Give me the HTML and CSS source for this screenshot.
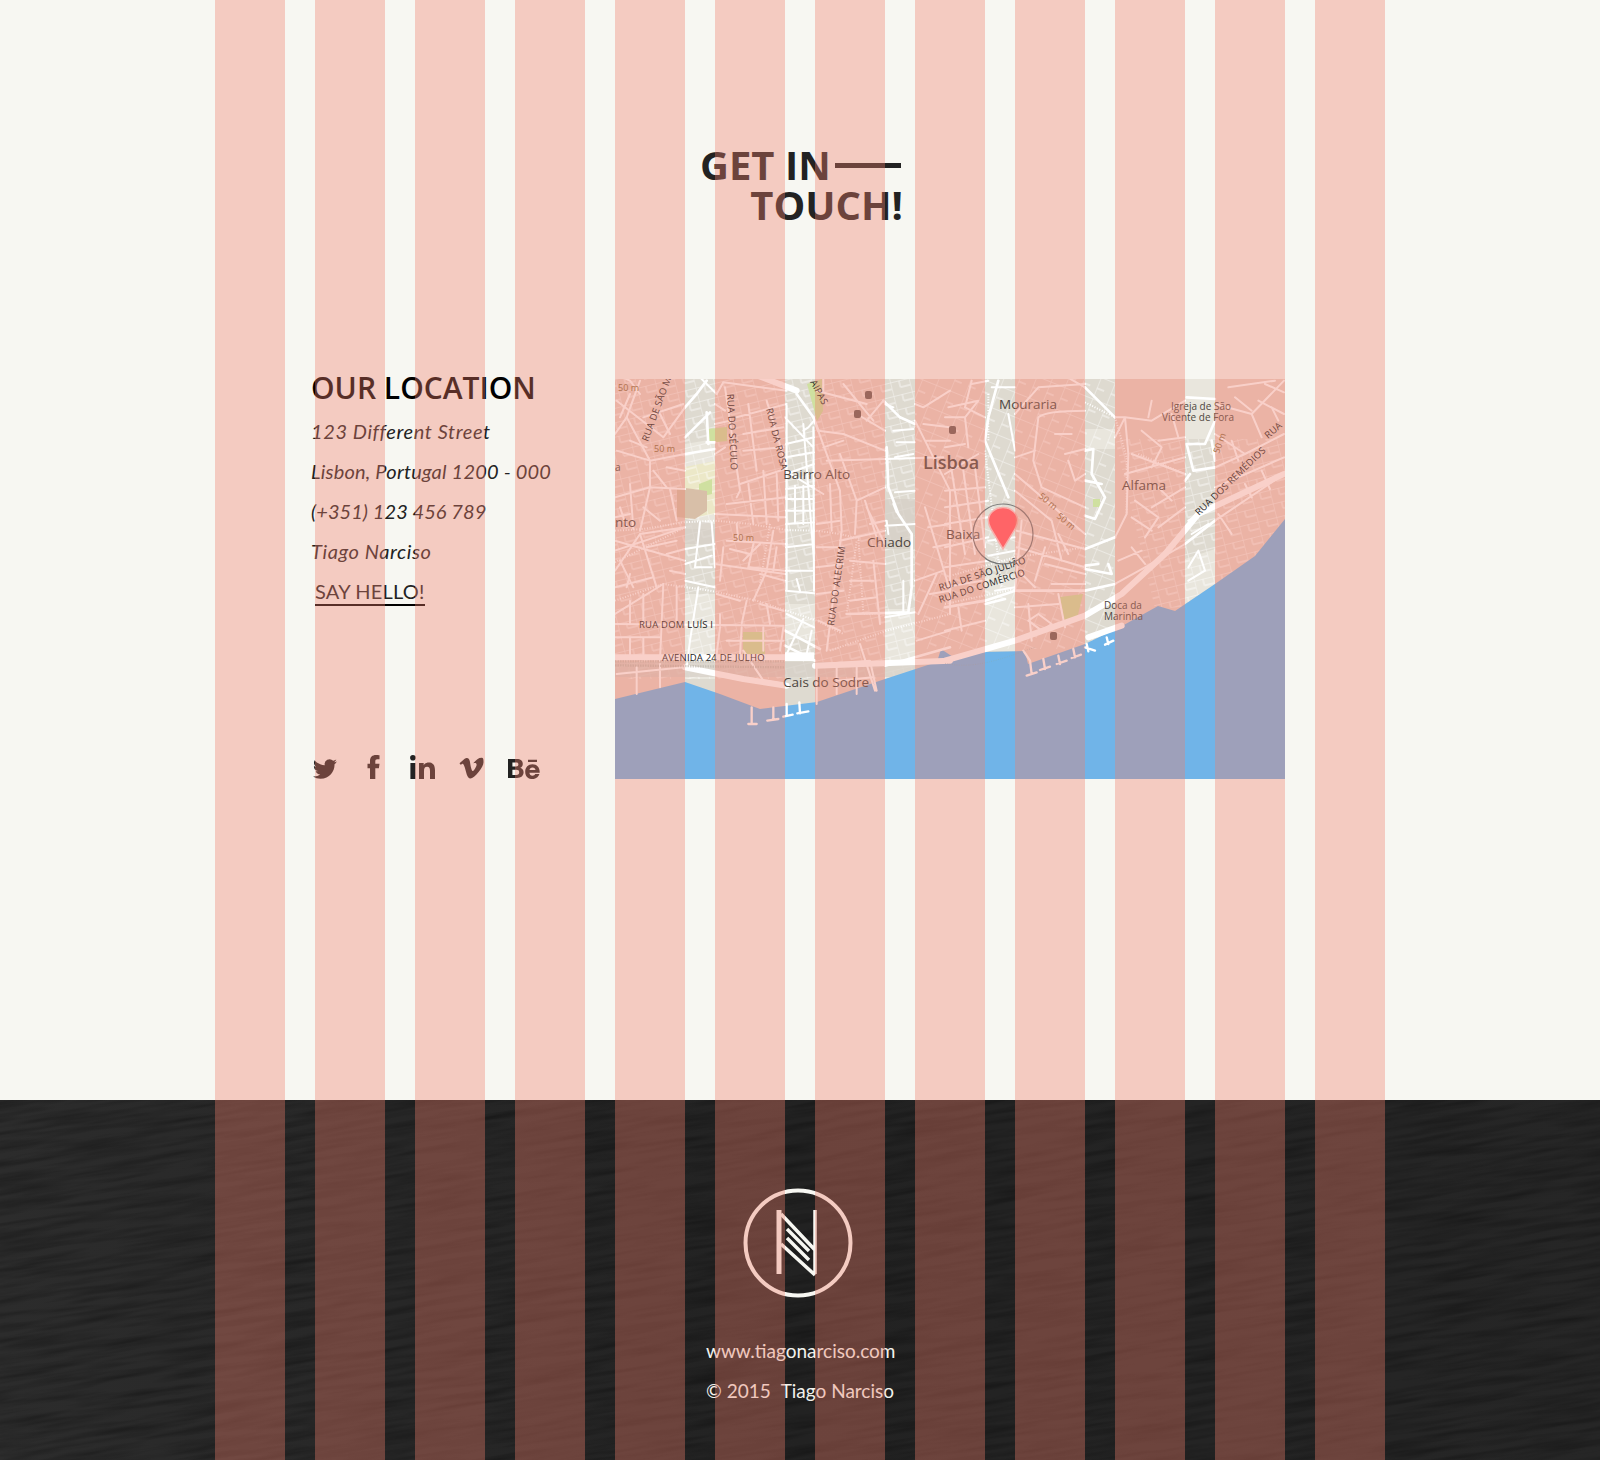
FILE: index.html
```html
<!DOCTYPE html>
<html lang="en">
<head>
<meta charset="utf-8">
<title>Get in touch</title>
<link rel="stylesheet" href="styles.css">
</head>
<body>
<main class="contact">
  <h1 class="title"><span class="title-first">GET IN<span class="title-rule"></span></span><span class="title-second">TOUCH!</span></h1>
  <div class="row">
    <section class="location">
      <h2 class="location-title">OUR LOCATION</h2>
      <p class="line line-wide">123 Different Street</p>
      <p class="line line-mixed">Lisbon, Portugal 1200 - 000</p>
      <p class="line line-num">(+351) 123 456 789</p>
      <p class="line line-wide">Tiago Narciso</p>
      <a class="hello" href="#">SAY HELLO!</a>
      <div class="social">
        <svg class="ic ic-tw" viewBox="0 0 24 24"><path d="M23.95 4.57a10 10 0 01-2.82.77 4.96 4.96 0 002.16-2.72c-.95.55-2 .95-3.12 1.18a4.92 4.92 0 00-8.38 4.48C7.69 8.1 4.07 6.13 1.64 3.16a4.82 4.82 0 00-.67 2.48c0 1.71.87 3.21 2.19 4.1a4.9 4.9 0 01-2.23-.62v.06a4.92 4.92 0 003.95 4.83 5 5 0 01-2.21.08 4.94 4.94 0 004.6 3.42A9.87 9.87 0 010 19.54a13.94 13.94 0 007.55 2.21c9.05 0 14-7.5 14-13.98 0-.21 0-.42-.02-.63a9.94 9.94 0 002.46-2.55z"/></svg>
        <svg class="ic ic-fb" viewBox="0 0 12 24"><path d="M2.500 24V13.200H0V8.800h2.500V6C2.500 2 4.800 0 8.400 0c1.500 0 2.900.1 3.600.2v4.100H9.800c-1.500 0-2 .7-2 2v2.500H12l-.6 4.400H7.800V24z"/></svg>
        <svg class="ic ic-in" viewBox="0 0 25 24"><path d="M.4 8h5v16h-5zM2.900 0a2.800 2.800 0 110 5.600 2.800 2.800 0 010-5.600zM9 8h4.700v2.300C14.600 8.700 16.400 7.600 18.700 7.600c4.400 0 6.300 2.800 6.300 7.600V24h-5v-8c0-2.800-.8-4.200-2.900-4.200-2.300 0-3.100 1.500-3.100 4.400V24H9z"/></svg>
        <svg class="ic ic-vm" viewBox="0 0 24 22"><path d="M23.980 5.420c-.11 2.340-1.740 5.540-4.900 9.600C15.820 19.340 13.050 21.500 10.800 21.500c-1.400 0-2.580-1.300-3.550-3.880L5.310 10.500C4.590 7.920 3.820 6.630 3 6.630c-.18 0-.8.370-1.870 1.120L0 6.300a315 315 0 003.490-3.120C5.060 1.820 6.240 1.100 7.030 1.030c1.860-.18 3 1.090 3.430 3.820.46 2.940.79 4.770.97 5.490.54 2.440 1.130 3.660 1.770 3.660.5 0 1.250-.79 2.260-2.370 1-1.580 1.540-2.780 1.610-3.610.14-1.360-.4-2.050-1.610-2.050-.57 0-1.160.13-1.760.39C16.870 2.540 19.100.680 22.400.790c1.440.07 1.690 1.660 1.580 4.630z"/></svg>
        <svg class="ic ic-be" viewBox="0 0 32 20"><path d="M0 0h8.800c3.800 0 6 1.900 6 4.900 0 1.800-.9 3.100-2.500 3.800 2.100.6 3.300 2.400 3.300 4.600 0 3.500-2.500 5.700-6.600 5.700H0zm4.400 3.500v3.900h3.700c1.500 0 2.300-.7 2.300-2s-.8-1.900-2.300-1.900zm0 7.200v5.300h4c1.900 0 2.800-.8 2.800-2.700s-.9-2.600-2.800-2.600zM24.500 5.300c4.600 0 7.400 3.500 7.200 8.400H21.400c.2 2 1.300 3 3.100 3 1.300 0 2.200-.6 2.700-1.600h4.200c-.9 3.100-3.500 5-7 5-4.300 0-7.200-3-7.200-7.400 0-4.400 2.900-7.400 7.300-7.400zm0 3.200c-1.700 0-2.800 1-3 2.500h6c-.2-1.500-1.300-2.500-3-2.500zM20 .8h9v2.300h-9z"/></svg>
      </div>
    </section>
    <div class="map">
      <svg class="map-svg" viewBox="0 0 670 400">
        <defs>
          <pattern id="bands" width="100" height="400" patternUnits="userSpaceOnUse"><rect class="band" width="70" height="400"/></pattern>
          <pattern id="fabric-a" width="19" height="14" patternUnits="userSpaceOnUse" patternTransform="rotate(-14)"><path class="fabric" d="M0 0H19M0 0V14M9 0V7M9 7H19"/></pattern>
          <pattern id="fabric-b" width="15" height="23" patternUnits="userSpaceOnUse" patternTransform="rotate(22)"><path class="fabric" d="M0 0H15M0 0V23M0 12H8"/></pattern>
        </defs>
        <rect class="m-land" width="670" height="400"/>
        <path class="m-light" d="M70 65 L100 60 L100 150 L70 150Z M70 215 L100 215 L100 300 L70 300Z M270 230 L300 230 L300 295 L270 300Z M370 195 L400 195 L400 272 L370 272Z M570 180 L600 170 L600 205 L570 225Z M570 0 L600 0 L600 60 L570 60Z M170 225 L200 225 L200 260 L170 260Z M470 50 L500 50 L500 70 L470 70Z"/>
        <path class="m-cream" d="M70 88 L100 82 L100 135 L70 140Z"/>
        <rect width="670" height="400" fill="url(#bands)"/>
        <path class="fabric-fill" fill="url(#fabric-a)" d="M0 0H300V300H0Z M500 60H670V220L540 230Z"/>
        <path class="fabric-fill" fill="url(#fabric-b)" d="M300 0H500V270H300Z"/>
        <path class="m-park" d="M192 5 L207 0 L208 32 L202 42Z M92 50 L112 48 L112 62 L92 64Z M84 105 L97 100 L97 115 L84 118Z M128 253 L150 253 L150 275 L128 275Z M445 218 L468 215 L462 240 L450 245Z M478 120 L485 120 L485 128 L478 128Z"/>
        <path class="m-orange" d="M62 108 L78 110 L92 112 L92 132 L80 140 L62 138Z"/>
        <path class="m-dark" d="M0 283 L615 283 L615 298 L0 298Z M270 120 L300 120 L300 170 L270 170Z M70 140 L100 145 L100 165 L70 165Z"/>
        <path class="m-water" d="M0 320 L70 303 L105 315 L145 330 L202 323 L270 300 L322 283 L326 270 L338 278 L370 273 L410 272 L413 285 L470 265 L507 247 L543 227 L560 232 L600 205 L640 177 L670 140 L670 400 L0 400Z"/>
        <g transform="translate(-5,-5) scale(.33333)">
          <g class="rd">
            <path d="M225 100 L260 60 L290 20 M225 190 L300 115 M225 240 L315 225 M290 205 L315 205 M290 115 L295 210"/>
            <path d="M525 770 L630 825 M525 815 L615 860 M225 880 L320 900 M825 875 L1020 820"/>
            <path d="M560 60 L610 130 L625 170"/>
            <path d="M820 80 L870 130 L915 150"/>
            <path d="M830 220 L835 340 L865 420 L905 480 L905 640 L895 715 L710 720"/>
            <path class="rd-fat" d="M525 848 L612 848"/>
          </g>
          <g class="rt">
            <path d="M530 95 L530 650 M580 170 L595 160 L612 140 M610 160 L612 650 M580 150 L612 560 M525 130 L610 220 M528 210 L612 190 M528 250 L612 235 M528 300 L612 270 M528 345 L612 335 M528 375 L612 375 M528 410 L612 410 M528 450 L612 445 M528 520 L612 510 M528 590 L612 590 M528 650 L612 658 M555 335 L555 450 M580 335 L580 450 M560 615 L570 650"/>
            <path d="M270 445 L255 580 L305 580 M305 445 L315 580 M225 525 L315 510 M225 570 L305 545 M225 620 L315 640 M265 640 L240 800 L230 880 M530 720 L612 760 M580 735 L530 840 M605 770 L590 840"/>
            <path d="M835 480 L830 440 M850 390 L860 415 M855 355 L915 350 M825 455 L915 450 M880 620 L880 720 M825 730 L915 715 M825 90 L850 100 M850 170 L910 165 M860 205 L915 205 M855 250 L910 240"/>
          </g>
          <g class="rp">
            <path d="M15 370 L120 340 L225 345 M120 260 L120 340 L90 470 M50 130 L120 260 L225 240 M90 20 L50 130 M100 130 L220 90 M160 190 L225 100 M20 80 L160 190 M20 230 L120 260 M60 330 L70 465 M180 345 L200 440 M15 500 L225 560 M15 590 L90 480 L140 640 M90 480 L225 460 M160 630 L150 860 M15 720 L160 630 M15 530 L225 460 M60 600 L50 640 M170 540 L225 525 M15 750 L520 755 M15 640 L130 610"/>
            <path d="M30 130 L60 60 M150 120 L180 180 M15 180 L50 130 M60 200 L110 220 M170 280 L225 290 M130 290 L170 340 M30 400 L50 460 M100 400 L150 440 M15 430 L60 420 M110 520 L200 500 M30 560 L70 640 M180 590 L225 600 M60 680 L60 750 M100 660 L100 750 M200 640 L200 750 M15 790 L150 790 M60 790 L60 850 M100 790 L100 850 M20 900 L220 880 M80 880 L80 960 M150 870 L150 940"/>
            <path d="M320 60 L340 25 L530 50 M345 40 L390 350 L380 370 M390 330 L525 285 M380 130 L530 90 M470 80 L530 280 M415 90 L440 290 M350 390 L530 370 M420 370 L430 450 M460 290 L470 450 M315 240 L345 220 M315 420 L525 430 M350 500 L530 510 M450 510 L400 560 M360 525 L420 540 M315 570 L525 600 M430 510 L415 580 M490 470 L470 590 L430 680 M470 690 L480 750 M410 680 L395 750 M420 580 L525 590 M320 660 L390 680 M400 830 L460 920 L530 930"/>
            <path d="M315 90 L345 110 M315 150 L360 140 M400 180 L520 160 M400 230 L520 220 M415 330 L420 370 M500 300 L505 440 M380 450 L385 500 M500 520 L490 590 M330 720 L330 755 M450 690 L520 710 M460 760 L460 830 M520 760 L510 830 M330 760 L320 840 M395 760 L390 840 M350 800 L520 800 M340 520 L330 620 M450 600 L525 620"/>
            <path d="M610 130 L690 350 L695 470 L650 830 M650 260 L1000 250 M640 360 L525 290 M660 330 L665 470 M625 170 L700 180 M690 240 L740 380 L735 480 M740 380 L825 340 M765 380 L800 490 M770 400 L825 510 M690 500 L825 470 M790 560 L810 750 M620 520 L700 520 M620 580 L700 570 M620 660 L700 650 M720 560 L825 570 M640 870 L780 860 L800 950 M620 870 L620 990 M750 810 L795 950"/>
            <path d="M700 180 L825 230 M740 120 L825 170 M640 220 L700 200 M620 450 L690 440 M720 620 L790 620 M720 680 L800 670 M625 740 L690 770 M780 450 L825 440 M680 880 L680 960 M740 880 L740 960 M680 920 L790 910 M640 10 L640 50"/>
            <path d="M915 90 L940 100 L1020 50 M915 140 L1020 350 L1020 720 M940 150 L1020 160 M945 400 L1020 650 M915 620 L1000 590 M960 660 L1020 650 M925 720 L980 600 M950 200 L1020 200 M955 460 L1020 450 M970 520 L1020 510 M920 800 L1020 770"/>
            <path d="M625 10 L780 0 M620 50 L770 90 M820 80 L770 140 M700 30 L790 140"/>
            <path class="rp-wide" d="M15 850 L525 850 M615 875 L1020 860"/>
            <path class="rp-wide" d="M225 880 L400 915 L530 935"/>
            <path class="rp-wide" d="M430 0 L560 50"/>
            <path d="M15 0 L60 20 L90 60 M260 0 L320 60"/>
            <path class="pier" d="M425 1000 L425 1050 M415 1050 L440 1050 M490 1000 L490 1035 M472 1040 L505 1035 M530 990 L530 1025 M520 1028 L548 1022 M568 985 L570 1018 M562 1018 L595 1012"/>
          </g>
          <g class="rdot">
            <path d="M15 470 L100 465 220 445 315 440 420 450 530 468 620 470 690 480 750 495 M15 680 L160 630 300 650 440 680 620 740 700 780 M660 830 L830 770 1020 720 M710 720 L740 500 M745 490 L760 720 895 715 905 650 M15 565 L225 460 M480 450 L450 630"/>
          </g>
          <path class="rail" d="M15 862 L525 862 M15 874 L525 880"/>
        </g>
        <g transform="translate(330,-5) scale(.33333)">
          <g class="rd">
            <path d="M120 200 L190 370 M160 20 L130 130 L120 200 M0 700 L120 680 L210 650 L420 650 L510 630 M720 510 L810 440 M420 725 L510 680 M420 40 L510 130 M120 690 L180 675"/>
            <path d="M725 210 L745 290 L810 280 M800 200 L810 260 M735 300 L720 320 M420 230 L445 225 L440 300 L480 370 L450 435 L420 425 M420 320 L470 330 M420 525 L510 490 M420 585 L500 600 L490 570 M420 575 L460 570 M725 70 L810 75 M810 140 L780 210 L725 210"/>
          </g>
          <g class="rt">
            <path d="M140 40 L210 40 M190 120 L210 230 M130 500 L210 490 M130 545 L210 530 M150 650 L210 640 M730 440 L810 390 M740 480 L790 450 M730 580 L760 530 L780 590 L730 620"/>
          </g>
          <g class="rp">
            <path d="M0 300 L100 240 M20 290 L60 540 M55 290 L90 540 M90 280 L120 520 M0 350 L120 340 M0 400 L130 380 M0 450 L130 430 M0 520 L130 490 M0 580 L130 560 M10 100 L100 80 L60 130 L70 220 M120 130 L60 100 L80 20 M0 130 L60 130 M80 30 L130 20 M0 220 L60 210 M0 770 L120 740 M40 700 L50 770 M0 640 L110 620"/>
            <path d="M210 300 L420 480 M210 350 L320 440 L350 560 M215 470 L420 525 M215 520 L420 580 M270 620 L300 520 M230 600 L270 640 M210 650 L230 440 M300 570 L420 600 M320 630 L420 630 M280 130 Q300 110 420 110 M280 130 L265 260 L290 340 L420 400 M360 240 L420 225 M370 260 L390 320 L420 300 M420 40 L350 0 M210 120 L280 40 L420 30 M330 180 L380 180"/>
            <path d="M210 700 L340 690 M250 690 L260 800 M340 660 L360 760 M280 720 L320 750 L290 770 L250 740Z M210 250 L270 230 M340 480 L370 540"/>
            <path d="M510 130 L540 130 L550 240 L545 420 L510 490 M510 190 L540 130 L620 140 L720 80 M560 240 L720 300 M540 300 L720 250 M570 380 L640 430 L600 490 M620 400 L720 340 M640 460 L720 400 M510 630 L600 580 L720 510 M640 200 L720 190 M590 170 L650 220 L620 280 M560 520 L600 570 M620 80 L610 130 M680 120 L700 190 M640 340 L680 380 M560 430 L620 470 M520 560 L590 530"/>
            <path d="M810 280 L900 240 L1017 180 M810 90 L920 120 L1017 20 M810 440 L1017 300 M810 340 L1017 250 M920 120 L950 190 M870 70 L920 110 M940 80 L1017 120 M810 180 L900 240 M850 40 L990 20 M900 330 L920 370 M950 290 L975 345 M960 30 L1017 55 M820 420 L860 480 M860 200 L880 260 M980 100 L1000 140"/>
            <path class="rp-wide" d="M0 860 L210 800 L420 725 L530 660 L660 540 L760 420 L1017 300"/>
            <path class="rp-wide" d="M430 790 L530 755"/>
            <path class="pier" d="M235 830 L255 860 L260 900 M245 905 L275 895 M295 855 L300 885 M285 888 L315 878 M340 845 L345 870 M335 870 L365 860 M385 825 L390 850 M380 852 L408 842 M425 810 L430 832 M420 820 L450 830 M485 790 L490 810 M480 812 L505 800"/>
          </g>
          <g class="rdot">
            <path d="M130 60 L130 200 M120 230 L170 640 M0 610 L210 550 L420 520 M420 525 L510 490 M0 690 L210 645 M510 130 L545 250 L545 420 M580 240 L720 300 M420 85 L510 130"/>
          </g>
          <path class="m-line" d="M0 868 C60 880 120 875 240 830 L270 820"/>
        </g>
        <g class="labels">
          <text class="l-s" x="168" y="100">Bairro Alto</text>
          <text class="l-s" x="252" y="168">Chiado</text>
          <text class="l-b" x="308" y="90">Lisboa</text>
          <text class="l-s" x="384" y="30">Mouraria</text>
          <text class="l-s" x="331" y="160">Baixa</text>
          <text class="l-s" x="507" y="111">Alfama</text>
          <text class="l-s" x="168" y="308">Cais do Sodre</text>
          <text class="l-s" x="0" y="148">nto</text>
          <text class="l-x" x="0" y="92">a</text>
          <text class="l-x" x="586" y="31" text-anchor="middle">Igreja de São</text>
          <text class="l-x" x="583" y="42" text-anchor="middle">Vicente de Fora</text>
          <text class="l-x" x="489" y="230">Doca da</text>
          <text class="l-x" x="489" y="241">Marinha</text>
          <text class="l-r" x="24" y="249">RUA DOM LUÍS I</text>
          <text class="l-r" x="47" y="282">AVENIDA 24 DE JULHO</text>
          <text class="l-r" transform="translate(219,247) rotate(-82)">RUA DO ALECRIM</text>
          <text class="l-r" transform="translate(112,15) rotate(87)">RUA DO SÉCULO</text>
          <text class="l-r" transform="translate(151,30) rotate(76)">RUA DA ROSA</text>
          <text class="l-r" transform="translate(33,63) rotate(-70)">RUA DE SÃO M.</text>
          <text class="l-r" transform="translate(195,3) rotate(62)">AIPAS</text>
          <text class="l-r" transform="translate(325,212) rotate(-18)">RUA DE SÃO JULIÃO</text>
          <text class="l-r" transform="translate(325,224) rotate(-18)">RUA DO COMÉRCIO</text>
          <text class="l-r" transform="translate(584,137) rotate(-44)">RUA DOS REMÉDIOS</text>
          <text class="l-r" transform="translate(653,60) rotate(-40)">RUA</text>
          <text class="l-m" x="3" y="12">50 m</text>
          <text class="l-m" x="39" y="73">50 m</text>
          <text class="l-m" x="118" y="162">50 m</text>
          <text class="l-m" transform="translate(423,118) rotate(40)">50 m</text>
          <text class="l-m" transform="translate(441,138) rotate(40)">50 m</text>
          <text class="l-m" transform="translate(604,75) rotate(-70)">50 m</text>
        </g>
        <g class="metro">
          <rect x="250" y="12" width="7" height="8" rx="2"/><rect x="239" y="31" width="7" height="8" rx="2"/><rect x="334" y="47" width="7" height="8" rx="2"/><rect x="435" y="253" width="7" height="8" rx="2"/>
        </g>
        <circle class="pin-ring" cx="388" cy="155" r="30"/>
        <path class="pin" d="M388 170 L376 150 C372 143 373 137 377 133 C383 127 393 127 399 133 C403 137 404 143 400 150Z"/>
      </svg>
    </div>
  </div>
</main>
<footer class="footer">
  <svg class="texture" aria-hidden="true">
    <filter id="streaks" x="0" y="0" width="100%" height="100%">
      <feTurbulence type="fractalNoise" baseFrequency=".012 .16" numOctaves="3" seed="7"/>
      <feColorMatrix values="0 0 0 0 0  0 0 0 0 0  0 0 0 0 0  .6 0 0 0 -.22"/>
    </filter>
    <g transform="rotate(-9 800 180)"><rect x="-200" y="-300" width="2000" height="960" filter="url(#streaks)"/></g>
  </svg>
  <svg class="logo" viewBox="0 0 110 110">
    <circle class="logo-ring" cx="55" cy="55" r="52.500"/>
    <path class="logo-mark" d="M36 22V86"/>
    <path class="logo-mark thin" d="M72 22V86 M38 26L72 62 M38 56L72 87 M44 41L66 63 M44 50L66 72"/>
  </svg>
  <p class="foot-line">www.tiagonarciso.com</p>
  <p class="foot-line foot-copy"><span>© 2015</span><span>Tiago Narciso</span></p>
</footer>
<div class="columns" aria-hidden="true">
  <i></i><i></i><i></i><i></i><i></i><i></i><i></i><i></i><i></i><i></i><i></i><i></i>
</div>
</body>
</html>
```
FILE: styles.css
```css
* { box-sizing: border-box; }
html, body { margin: 0; padding: 0; }
body { position: relative; width: 1600px; height: 1460px; overflow: hidden; background: #f7f7f2; font-family: "Lato", sans-serif; color: #222; }

.contact { height: 1100px; padding-top: 145px; }
.title { width: 208px; margin: 0 auto; padding-left: 4px; font: 700 40px/40px "Open Sans", sans-serif; color: #222; }
.title-first { display: flex; align-items: center; gap: 4px; white-space: nowrap; }
.title-rule { width: 66px; height: 5px; background: #222; }
.title-second { display: block; margin-right: 1px; text-align: right; }

.row { display: grid; grid-template-columns: repeat(12, 70px); column-gap: 30px; width: 1170px; margin: 135px auto 0; }
.location { grid-column: span 4; padding: 8px 0 0 96px; }
.location-title { margin: 0 0 3px; font: 600 30px/40px "Open Sans", sans-serif; color: #000; white-space: nowrap; }
.line { margin: 0; font: italic 400 20px/40px "Lato", sans-serif; color: #222; white-space: nowrap; }
.line-wide { letter-spacing: .59px; }
.line-mixed { letter-spacing: .2px; }
.line-num { letter-spacing: .06px; }
.hello { display: inline-block; margin: 8px 0 0 4px; font: 400 20px/25px "Lato", sans-serif; letter-spacing: .2px; color: #222; text-decoration: none; border-bottom: 2px solid #000; }
.social { display: flex; align-items: flex-end; margin-top: 147px; height: 26px; }
.ic { fill: #222; display: block; flex: none; }
.ic-tw { width: 24px; height: 24px; margin: 0 0 -2px 2px; }
.ic-fb { width: 13px; height: 24px; margin-left: 30px; }
.ic-in { width: 25px; height: 24px; margin-left: 30px; }
.ic-vm { width: 25px; height: 22px; margin-left: 24px; }
.ic-be { width: 32px; height: 20px; margin-left: 24px; }

.map { grid-column: span 7; height: 400px; margin-top: 19px; }
.map-svg { display: block; width: 670px; height: 400px; }
.m-land { fill: #dedad0; }
.m-light { fill: #e9e6dd; }
.m-cream { fill: #ece8c8; }
.band { fill: #ffbeb2; fill-opacity: .34; }
.fabric { fill: none; stroke: #fff; stroke-width: 1.300; }
.fabric-fill { opacity: .55; }
.m-park { fill: #cfe0a0; }
.m-orange { fill: #d8bfa8; }
.m-dark { fill: #d5cfc6; opacity: .7; }
.m-water { fill: #70b4e8; }
.rd, .rt, .rp, .rdot { fill: none; stroke-linecap: round; stroke-linejoin: round; }
.rd { stroke: #fff; stroke-width: 8; }
.rd-fat { stroke-width: 26; stroke-linecap: butt; }
.rt { stroke: #fff; stroke-width: 6; }
.rp { stroke: #fff; stroke-width: 6; }
.rp-wide { stroke-width: 18; }
.pier { stroke-width: 7; }
.rdot { stroke: #fff; stroke-width: 6; stroke-dasharray: 3 5; stroke-linecap: butt; }
.rail { fill: none; stroke: #bdb7ad; stroke-width: 7; stroke-dasharray: 2 3; }
.m-line { fill: none; stroke: #8aa; stroke-width: 2; stroke-dasharray: 3 4; opacity: .6; }
.labels text { font-family: "Open Sans", sans-serif; fill: #4d4640; }
.l-s { font-size: 13.500px; }
.l-b { font-size: 18px; font-weight: 600; }
.l-x { font-size: 10px; }
.l-r { font-size: 9.500px; fill: #222 !important; letter-spacing: .2px; }
.l-m { font-size: 9px; fill: #8a6a3c !important; }
.metro rect { fill: #6b5a54; }
.pin-ring { fill: rgba(255,255,255,.12); stroke: #777; stroke-width: 1.200; }
.pin { fill: #ff6467; stroke: #f8b0ac; stroke-width: 1.500; }

.footer { position: relative; height: 360px; padding-top: 88px; background: linear-gradient(90deg, #2c2c2c 0%, #222 50%, #262626 100%); overflow: hidden; }
.texture { position: absolute; left: 0; top: 0; width: 1600px; height: 360px; }
.logo { position: relative; display: block; width: 110px; height: 110px; margin-left: 743px; }
.logo-ring { fill: none; stroke: #f7f7f2; stroke-width: 4; }
.logo-mark { fill: none; stroke: #f7f7f2; stroke-width: 5; }
.logo-mark.thin { stroke-width: 3.500; }
.foot-line { position: relative; width: 188px; margin: 0 0 0 706px; font: 400 19px/40px "Lato", sans-serif; color: #f2f2ed; white-space: nowrap; }
.logo + .foot-line { margin-top: 33px; }
.foot-copy { display: flex; justify-content: space-between; }

.columns { position: absolute; left: 215px; top: 0; bottom: 0; width: 1170px; display: grid; grid-template-columns: repeat(12, 70px); column-gap: 30px; pointer-events: none; }
.columns i { display: block; background: rgba(239, 127, 108, .366); }
```
